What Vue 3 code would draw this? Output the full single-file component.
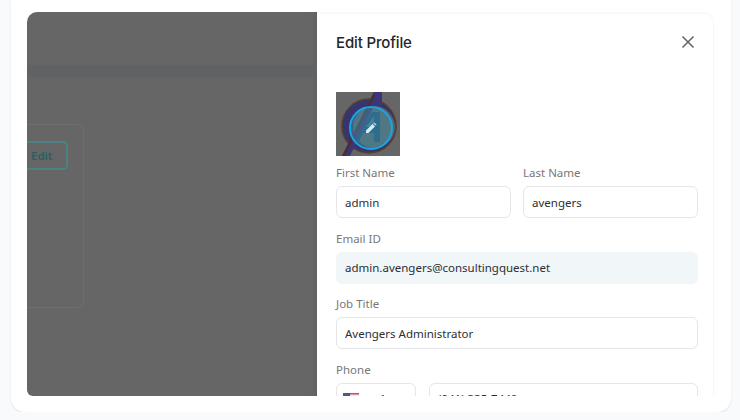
<template>
  <div class="shell">
    <div class="frame">
      <!-- dimmed page behind the drawer -->
      <div class="backdrop">
        <div class="band"></div>
        <div class="info-card">
          <button class="edit-btn">Edit</button>
        </div>
      </div>

      <!-- drawer -->
      <aside class="drawer">
        <header class="drawer-head">
          <h3>Edit Profile</h3>
          <svg class="close" width="14" height="14" viewBox="0 0 14 14">
            <path d="M1.5 1.5 12.5 12.5M12.5 1.5 1.5 12.5" stroke="#5f6368" stroke-width="1.5" fill="none" />
          </svg>
        </header>

        <div class="avatar">
          <svg width="64" height="64" viewBox="0 0 64 64">
            <rect width="64" height="64" fill="#666" />
            <circle cx="33" cy="34" r="27" fill="#38346e" stroke="#55412f" stroke-width="1.5" />
            <circle cx="38" cy="35" r="21" fill="#5e6468" />
            <path d="M6 64 35 8 38 0H46V14H38L14 64Z" fill="#3b3776" />
            <path d="M6 64 9 64 38 6 38 0Z" fill="#4d2c3a" />
            <path d="M18 54 36 20H44V50H38V41H27L23 50Z" fill="#1d4f7c" />
            <path d="M30 35 38 24V35Z" fill="#3f7d96" />
          </svg>
          <div class="avatar-edit">
            <svg width="14" height="14" viewBox="0 0 14 14">
              <path d="M2 12V9.6L8.6 3 11 5.4 4.4 12Z" fill="#d4ecf8" />
              <path d="M9.4 2.2 10.2 1.4 12.6 3.8 11.8 4.6Z" fill="#d4ecf8" />
            </svg>
          </div>
        </div>

        <div class="form-row two">
          <div class="field">
            <label>First Name</label>
            <div class="input">admin</div>
          </div>
          <div class="field">
            <label>Last Name</label>
            <div class="input">avengers</div>
          </div>
        </div>
        <div class="field">
          <label>Email ID</label>
          <div class="input readonly">admin.avengers@consultingquest.net</div>
        </div>
        <div class="field">
          <label>Job Title</label>
          <div class="input">Avengers Administrator</div>
        </div>
        <div class="field">
          <label>Phone</label>
          <div class="phone">
            <div class="input country">
              <svg width="16" height="11" viewBox="0 0 16 11">
                <rect width="16" height="11" fill="#e9e4e6" />
                <path d="M0 0H16V1.6H0ZM0 3.2H16V4.8H0ZM0 6.4H16V8H0ZM0 9.6H16V11H0Z" fill="#c9515c" />
                <rect width="7" height="5" fill="#4a5a8c" />
              </svg>
              <span>+1</span>
            </div>
            <div class="input number">(941) 335-7440</div>
          </div>
        </div>
      </aside>
    </div>
  </div>
</template>

<script setup>
</script>

<style>
body {
  background: #f8fafc;
}
</style>

<style scoped>
.shell {
  box-sizing: border-box;
  width: 720px;
  height: 412px;
  margin-left: 11px;
  padding: 12px 17px 16px 16px;
  background: #fff;
  border-radius: 0 0 14px 14px;
  box-shadow: 0 1px 2px rgba(60, 70, 90, 0.12);
}

.frame {
  display: flex;
  height: 384px;
  border-radius: 10px 10px 0 6px;
  overflow: hidden;
}

.backdrop {
  flex: 1;
  background: #666;
  padding-top: 53px;
  box-shadow: inset -6px 0 6px -6px rgba(0, 0, 0, 0.12);
}

.band {
  height: 12px;
  background: #606263;
}

.info-card {
  box-sizing: border-box;
  width: 57px;
  height: 184px;
  margin-top: 47px;
  padding-top: 16px;
  border: 1px solid #6e6e6e;
  border-left: none;
  border-radius: 0 6px 6px 0;
}

.edit-btn {
  display: block;
  box-sizing: border-box;
  width: 41px;
  height: 29px;
  padding: 0 0 0 4px;
  background: none;
  border: 2px solid #4a8285;
  border-left: none;
  border-radius: 0 5px 5px 0;
  color: #2a5f62;
  font: 600 11.5px "Noto Sans", sans-serif;
  text-align: left;
}

.drawer {
  box-sizing: border-box;
  width: 397px;
  padding: 0 16px 0 19px;
  background: #fff;
  border-radius: 0 10px 0 0;
  box-shadow: inset 0 4px 3px -3px rgba(60, 70, 90, 0.06), inset -1px 0 0 #f5f6f8;
  overflow: hidden;
  font-family: "Noto Sans", sans-serif;
}

.drawer-head {
  display: flex;
  align-items: center;
  justify-content: space-between;
  height: 60px;
  padding-right: 3px;
}

.drawer-head h3 {
  margin: 0;
  color: #23262b;
  font: 500 15px "Inter", sans-serif;
  letter-spacing: -0.15px;
}

.close {
  display: block;
}

.avatar {
  position: relative;
  width: 64px;
  height: 64px;
  margin-top: 20px;
}

.avatar > svg {
  display: block;
}

.avatar-edit {
  position: absolute;
  left: 13px;
  top: 14px;
  box-sizing: border-box;
  width: 44px;
  height: 44px;
  display: flex;
  align-items: center;
  justify-content: center;
  border: 2px solid #17a6e6;
  border-radius: 50%;
  background: rgba(64, 140, 160, 0.5);
}

.form-row.two {
  display: grid;
  grid-template-columns: 175px 175px;
  gap: 12px;
  margin-top: 9px;
}

.field {
  margin-bottom: 12.5px;
}

.field label {
  display: block;
  height: 16px;
  margin-bottom: 5px;
  color: #777;
  font-size: 11.5px;
  line-height: 16px;
}

.input {
  box-sizing: border-box;
  height: 32px;
  padding: 0 8px;
  display: flex;
  align-items: center;
  border: 1px solid #e4e6e9;
  border-radius: 6px;
  color: #2b2f33;
  font-size: 11.5px;
}

.readonly {
  background: #f1f6f9;
  border-color: #f1f6f9;
}

.phone {
  display: flex;
  gap: 13px;
}

.country {
  width: 80px;
  gap: 14px;
  padding-left: 6px;
}

.number {
  flex: 1;
}
</style>
